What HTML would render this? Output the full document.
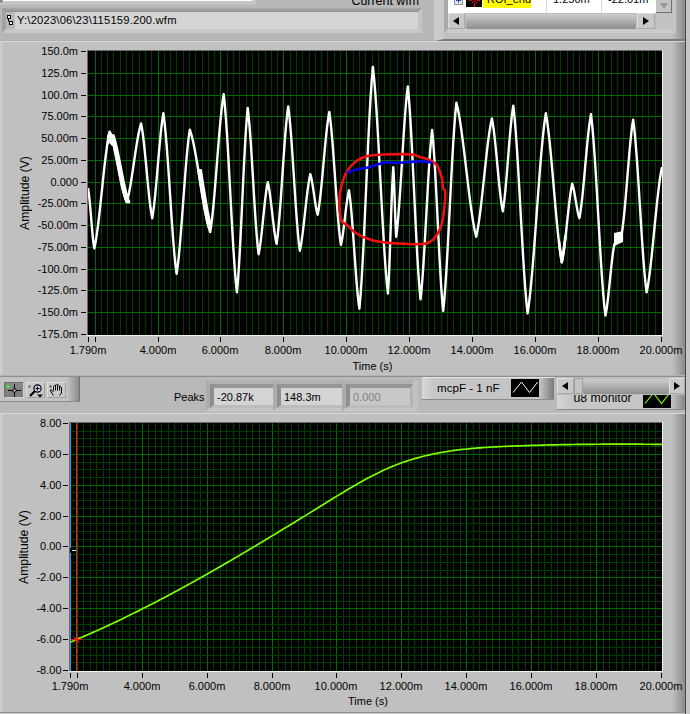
<!DOCTYPE html><html><head><meta charset="utf-8"><style>
html,body{margin:0;padding:0;}
body{width:690px;height:714px;position:relative;overflow:hidden;background:#c0c0c0;font-family:"Liberation Sans", sans-serif;}
.t{position:absolute;white-space:nowrap;line-height:normal;}
div{box-sizing:border-box;}
</style></head><body>
<div style="position:absolute;left:0px;top:0px;width:690px;height:41px;background:#b7b7b7;"></div>
<div style="position:absolute;left:0px;top:0px;width:256px;height:5px;background:linear-gradient(#cacaca,#c0c0c0);"></div>
<div style="position:absolute;left:3px;top:0px;width:249px;height:1px;background:#ffffff;"></div>
<div style="position:absolute;left:0px;top:0px;width:3px;height:3px;background:#8a8a8a;border-radius:0 0 3px 0;"></div>
<div style="position:absolute;left:2px;top:8px;width:420px;height:25px;border-top:4px solid #9c9c9c;border-left:4px solid #a2a2a2;border-bottom:4px solid #c8c8c8;border-right:4px solid #c4c4c4;background:#d4d4d4;"></div>
<div style="position:absolute;left:6px;top:8px;width:412px;height:4px;background:linear-gradient(#adadad,#8e8e8e);"></div>
<div style="position:absolute;left:6px;top:12px;width:9px;height:17px;background:#bababa;"></div>
<svg style="position:absolute;left:6px;top:12px" width="9" height="17"><rect x="1.5" y="3.5" width="3" height="3" fill="#fff" stroke="#000"/><rect x="3.5" y="9.5" width="3" height="3" fill="#fff" stroke="#000"/><line x1="2.5" y1="6.5" x2="2.5" y2="9.5" stroke="#000"/></svg>
<div class="t" style="left:17px;top:14.48px;font-size:11.2px;color:#000;letter-spacing:0.2px;">Y:\2023\06\23\115159.200.wfm</div>
<div class="t" style="right:271px;text-align:right;top:-5.93px;font-size:12.4px;color:#000;">Current wfm</div>
<div style="position:absolute;left:434px;top:0px;width:251px;height:41px;border-left:10px solid #cbcbcb;border-bottom:2px solid #7a7a7a;background:#c0c0c0;"></div>
<div style="position:absolute;left:444px;top:0px;width:231px;height:33px;border-left:4px solid #a9a9a9;border-bottom:4px solid #cacaca;border-right:3px solid #c6c6c6;background:#fff;"></div>
<div style="position:absolute;left:454px;top:0px;width:9px;height:5px;background:#e8e8e8;border:1px solid #909090;border-top:none;border-radius:0 0 1px 1px;"></div>
<svg style="position:absolute;left:454px;top:0" width="9" height="5"><path d="M2 0.5 H7 M4.5 0 V3" stroke="#2050c0" stroke-width="1"/></svg>
<div style="position:absolute;left:466px;top:0px;width:16px;height:7px;background:#000;"></div>
<svg style="position:absolute;left:466px;top:0" width="16" height="7"><rect x="2.5" y="0" width="3" height="1" fill="#f00"/><rect x="11" y="0" width="3" height="1" fill="#f00"/><path d="M6 3 L8.5 0.5 L11 3" stroke="#f00" stroke-width="1" fill="none"/><line x1="8.5" y1="3" x2="8.5" y2="7" stroke="#f00" stroke-width="1"/></svg>
<div style="position:absolute;left:483px;top:0px;width:48px;height:8px;background:#ffff00;"></div>
<div class="t" style="left:487px;top:-6.64px;font-size:11px;color:#000;">ROI_end</div>
<div style="position:absolute;left:546px;top:0px;width:1px;height:13px;background:#d8d8d8;"></div>
<div style="position:absolute;left:601px;top:0px;width:1px;height:13px;background:#d8d8d8;"></div>
<div class="t" style="left:553px;top:-6.84px;font-size:11px;color:#000;">1.250m</div>
<div class="t" style="left:608px;top:-6.84px;font-size:11px;color:#000;">-22.01m</div>
<div style="position:absolute;left:656px;top:0px;width:16px;height:13px;background:#c4c4c4;border-right:1px solid #707070;border-bottom:1px solid #707070;"></div>
<svg style="position:absolute;left:659px;top:2px" width="10" height="8"><path d="M1 1 L9 1 L5 7 Z" fill="#9a9a9a"/></svg>
<div style="position:absolute;left:448px;top:13px;width:208px;height:16px;background:#bdbdbd;"></div>
<div style="position:absolute;left:448px;top:13px;width:17px;height:16px;background:#c8c8c8;border:1px solid #a8a8a8;border-top-color:#e0e0e0;border-left-color:#e0e0e0;"></div>
<svg style="position:absolute;left:448px;top:13px" width="17" height="16"><path d="M5 8 L11 4 L11 12 Z" fill="#000"/></svg>
<div style="position:absolute;left:466px;top:14px;width:170px;height:15px;background:linear-gradient(#cdcdcd,#8e8e8e);border-radius:2px;"></div>
<div style="position:absolute;left:637px;top:13px;width:18px;height:16px;background:#c8c8c8;border:1px solid #a8a8a8;border-top-color:#e0e0e0;border-left-color:#e0e0e0;"></div>
<svg style="position:absolute;left:637px;top:13px" width="18" height="16"><path d="M12 8 L6 4 L6 12 Z" fill="#000"/></svg>
<div style="position:absolute;left:656px;top:13px;width:16px;height:16px;background:#c2c2c2;"></div>
<div style="position:absolute;left:672px;top:0px;width:13px;height:714px;background:linear-gradient(90deg,#c0c0c0,#8a8a8a);"></div>
<div style="position:absolute;left:685px;top:0px;width:1px;height:714px;background:#4a4a4a;"></div>
<div style="position:absolute;left:686px;top:0px;width:4px;height:714px;background:#c6c6c6;"></div>
<div style="position:absolute;left:672px;top:0px;width:4px;height:34px;background:#c6c6c6;"></div>
<div style="position:absolute;left:672px;top:39px;width:13px;height:2px;background:#7a7a7a;"></div>
<div style="position:absolute;left:0px;top:40px;width:434px;height:1px;background:#b0b0b0;"></div>
<div style="position:absolute;left:0px;top:41px;width:685px;height:1px;background:#d6d6d6;"></div>
<div style="position:absolute;left:0px;top:42px;width:672px;height:334px;background:#c0c0c0;"></div>
<div style="position:absolute;left:0px;top:42px;width:3px;height:334px;background:linear-gradient(90deg,#d2d2d2,#c4c4c4);"></div>
<div style="position:absolute;left:0px;top:375px;width:685px;height:1px;background:#b4b4b4;"></div>
<div style="position:absolute;left:0px;top:376px;width:685px;height:1px;background:#8e8e8e;"></div>
<div style="position:absolute;left:0px;top:377px;width:685px;height:36px;background:#b9b9b9;"></div>
<svg style="position:absolute;left:88px;top:51px" width="574" height="284" shape-rendering="crispEdges">
<rect x="0" y="0" width="574" height="284" fill="#000"/>
<rect x="7" y="0" width="1" height="284" fill="#006c00"/>
<rect x="13" y="0" width="1" height="284" fill="#003b00"/>
<rect x="19" y="0" width="1" height="284" fill="#003b00"/>
<rect x="25" y="0" width="1" height="284" fill="#003b00"/>
<rect x="32" y="0" width="1" height="284" fill="#003b00"/>
<rect x="38" y="0" width="1" height="284" fill="#003b00"/>
<rect x="44" y="0" width="1" height="284" fill="#003b00"/>
<rect x="51" y="0" width="1" height="284" fill="#003b00"/>
<rect x="57" y="0" width="1" height="284" fill="#003b00"/>
<rect x="63" y="0" width="1" height="284" fill="#003b00"/>
<rect x="70" y="0" width="1" height="284" fill="#006c00"/>
<rect x="76" y="0" width="1" height="284" fill="#003b00"/>
<rect x="82" y="0" width="1" height="284" fill="#003b00"/>
<rect x="88" y="0" width="1" height="284" fill="#003b00"/>
<rect x="95" y="0" width="1" height="284" fill="#003b00"/>
<rect x="101" y="0" width="1" height="284" fill="#003b00"/>
<rect x="107" y="0" width="1" height="284" fill="#003b00"/>
<rect x="114" y="0" width="1" height="284" fill="#003b00"/>
<rect x="120" y="0" width="1" height="284" fill="#003b00"/>
<rect x="126" y="0" width="1" height="284" fill="#003b00"/>
<rect x="132" y="0" width="1" height="284" fill="#006c00"/>
<rect x="139" y="0" width="1" height="284" fill="#003b00"/>
<rect x="145" y="0" width="1" height="284" fill="#003b00"/>
<rect x="151" y="0" width="1" height="284" fill="#003b00"/>
<rect x="158" y="0" width="1" height="284" fill="#003b00"/>
<rect x="164" y="0" width="1" height="284" fill="#003b00"/>
<rect x="170" y="0" width="1" height="284" fill="#003b00"/>
<rect x="177" y="0" width="1" height="284" fill="#003b00"/>
<rect x="183" y="0" width="1" height="284" fill="#003b00"/>
<rect x="189" y="0" width="1" height="284" fill="#003b00"/>
<rect x="195" y="0" width="1" height="284" fill="#006c00"/>
<rect x="202" y="0" width="1" height="284" fill="#003b00"/>
<rect x="208" y="0" width="1" height="284" fill="#003b00"/>
<rect x="214" y="0" width="1" height="284" fill="#003b00"/>
<rect x="221" y="0" width="1" height="284" fill="#003b00"/>
<rect x="227" y="0" width="1" height="284" fill="#003b00"/>
<rect x="233" y="0" width="1" height="284" fill="#003b00"/>
<rect x="239" y="0" width="1" height="284" fill="#003b00"/>
<rect x="246" y="0" width="1" height="284" fill="#003b00"/>
<rect x="252" y="0" width="1" height="284" fill="#003b00"/>
<rect x="258" y="0" width="1" height="284" fill="#006c00"/>
<rect x="265" y="0" width="1" height="284" fill="#003b00"/>
<rect x="271" y="0" width="1" height="284" fill="#003b00"/>
<rect x="277" y="0" width="1" height="284" fill="#003b00"/>
<rect x="284" y="0" width="1" height="284" fill="#003b00"/>
<rect x="290" y="0" width="1" height="284" fill="#003b00"/>
<rect x="296" y="0" width="1" height="284" fill="#003b00"/>
<rect x="302" y="0" width="1" height="284" fill="#003b00"/>
<rect x="309" y="0" width="1" height="284" fill="#003b00"/>
<rect x="315" y="0" width="1" height="284" fill="#003b00"/>
<rect x="321" y="0" width="1" height="284" fill="#006c00"/>
<rect x="328" y="0" width="1" height="284" fill="#003b00"/>
<rect x="334" y="0" width="1" height="284" fill="#003b00"/>
<rect x="340" y="0" width="1" height="284" fill="#003b00"/>
<rect x="346" y="0" width="1" height="284" fill="#003b00"/>
<rect x="353" y="0" width="1" height="284" fill="#003b00"/>
<rect x="359" y="0" width="1" height="284" fill="#003b00"/>
<rect x="365" y="0" width="1" height="284" fill="#003b00"/>
<rect x="372" y="0" width="1" height="284" fill="#003b00"/>
<rect x="378" y="0" width="1" height="284" fill="#003b00"/>
<rect x="384" y="0" width="1" height="284" fill="#006c00"/>
<rect x="390" y="0" width="1" height="284" fill="#003b00"/>
<rect x="397" y="0" width="1" height="284" fill="#003b00"/>
<rect x="403" y="0" width="1" height="284" fill="#003b00"/>
<rect x="409" y="0" width="1" height="284" fill="#003b00"/>
<rect x="416" y="0" width="1" height="284" fill="#003b00"/>
<rect x="422" y="0" width="1" height="284" fill="#003b00"/>
<rect x="428" y="0" width="1" height="284" fill="#003b00"/>
<rect x="435" y="0" width="1" height="284" fill="#003b00"/>
<rect x="441" y="0" width="1" height="284" fill="#003b00"/>
<rect x="447" y="0" width="1" height="284" fill="#006c00"/>
<rect x="453" y="0" width="1" height="284" fill="#003b00"/>
<rect x="460" y="0" width="1" height="284" fill="#003b00"/>
<rect x="466" y="0" width="1" height="284" fill="#003b00"/>
<rect x="472" y="0" width="1" height="284" fill="#003b00"/>
<rect x="479" y="0" width="1" height="284" fill="#003b00"/>
<rect x="485" y="0" width="1" height="284" fill="#003b00"/>
<rect x="491" y="0" width="1" height="284" fill="#003b00"/>
<rect x="497" y="0" width="1" height="284" fill="#003b00"/>
<rect x="504" y="0" width="1" height="284" fill="#003b00"/>
<rect x="510" y="0" width="1" height="284" fill="#006c00"/>
<rect x="516" y="0" width="1" height="284" fill="#003b00"/>
<rect x="523" y="0" width="1" height="284" fill="#003b00"/>
<rect x="529" y="0" width="1" height="284" fill="#003b00"/>
<rect x="535" y="0" width="1" height="284" fill="#003b00"/>
<rect x="542" y="0" width="1" height="284" fill="#003b00"/>
<rect x="548" y="0" width="1" height="284" fill="#003b00"/>
<rect x="554" y="0" width="1" height="284" fill="#003b00"/>
<rect x="560" y="0" width="1" height="284" fill="#003b00"/>
<rect x="567" y="0" width="1" height="284" fill="#003b00"/>
<rect x="0" y="22" width="574" height="1" fill="#006c00"/>
<rect x="0" y="44" width="574" height="1" fill="#006c00"/>
<rect x="0" y="65" width="574" height="1" fill="#006c00"/>
<rect x="0" y="87" width="574" height="1" fill="#006c00"/>
<rect x="0" y="109" width="574" height="1" fill="#006c00"/>
<rect x="0" y="131" width="574" height="1" fill="#006c00"/>
<rect x="0" y="152" width="574" height="1" fill="#006c00"/>
<rect x="0" y="174" width="574" height="1" fill="#006c00"/>
<rect x="0" y="196" width="574" height="1" fill="#006c00"/>
<rect x="0" y="218" width="574" height="1" fill="#006c00"/>
<rect x="0" y="239" width="574" height="1" fill="#006c00"/>
<rect x="0" y="261" width="574" height="1" fill="#006c00"/>
</svg>
<div style="position:absolute;left:87px;top:50px;width:576px;height:1px;background:#6a6a6a;"></div>
<div style="position:absolute;left:87px;top:50px;width:1px;height:286px;background:#6a6a6a;"></div>
<div style="position:absolute;left:87px;top:335px;width:576px;height:1px;background:#f2f2f2;"></div>
<div style="position:absolute;left:662px;top:50px;width:1px;height:286px;background:#f2f2f2;"></div>
<svg style="position:absolute;left:88px;top:51px" width="574" height="284"><polyline points="0.00,137.00 0.53,140.23 1.05,144.36 1.58,149.29 2.10,154.87 2.62,160.91 3.15,167.20 3.67,173.49 4.20,179.53 4.72,185.11 5.25,190.04 5.77,194.17 6.30,197.40 7.58,191.16 8.85,183.18 10.12,173.66 11.40,162.88 12.67,151.19 13.95,139.05 15.22,126.91 16.50,115.22 17.77,104.44 19.05,94.92 20.32,86.94 21.60,80.70 23.02,84.46 24.45,89.26 25.88,95.00 27.30,101.50 28.72,108.53 30.15,115.85 31.58,123.17 33.00,130.20 34.42,136.70 35.85,142.44 37.28,147.24 38.70,151.00 39.90,146.80 41.10,141.44 42.30,135.03 43.50,127.78 44.70,119.92 45.90,111.75 47.10,103.58 48.30,95.72 49.50,88.47 50.70,82.06 51.90,76.70 53.10,72.50 54.03,77.57 54.95,84.04 55.88,91.76 56.80,100.52 57.72,109.99 58.65,119.85 59.57,129.71 60.50,139.18 61.42,147.94 62.35,155.66 63.27,162.13 64.20,167.20 65.13,161.59 66.07,154.42 67.00,145.86 67.93,136.17 68.87,125.67 69.80,114.75 70.73,103.83 71.67,93.33 72.60,83.64 73.53,75.08 74.47,67.91 75.40,62.30 76.50,70.89 77.60,81.86 78.70,94.97 79.80,109.81 80.90,125.89 82.00,142.60 83.10,159.31 84.20,175.39 85.30,190.23 86.40,203.34 87.50,214.31 88.60,222.90 89.70,215.18 90.80,205.32 91.90,193.55 93.00,180.21 94.10,165.77 95.20,150.75 96.30,135.73 97.40,121.29 98.50,107.95 99.60,96.18 100.70,86.32 101.80,78.60 103.50,84.08 105.20,91.09 106.90,99.45 108.60,108.92 110.30,119.18 112.00,129.85 113.70,140.52 115.40,150.78 117.10,160.25 118.80,168.61 120.50,175.62 122.20,181.10 123.32,173.72 124.45,164.29 125.57,153.03 126.70,140.28 127.82,126.46 128.95,112.10 130.07,97.74 131.20,83.93 132.32,71.17 133.45,59.91 134.57,50.48 135.70,43.10 136.80,53.71 137.90,67.26 139.00,83.43 140.10,101.76 141.20,121.61 142.30,142.25 143.40,162.89 144.50,182.74 145.60,201.07 146.70,217.24 147.80,230.79 148.90,241.40 149.80,231.53 150.70,218.94 151.60,203.89 152.50,186.85 153.40,168.39 154.30,149.20 155.20,130.01 156.10,111.55 157.00,94.51 157.90,79.46 158.80,66.87 159.70,57.00 160.61,64.82 161.52,74.81 162.43,86.74 163.33,100.25 164.24,114.89 165.15,130.10 166.06,145.31 166.97,159.95 167.88,173.46 168.78,185.39 169.69,195.38 170.60,203.20 171.37,199.35 172.13,194.43 172.90,188.56 173.67,181.90 174.43,174.69 175.20,167.20 175.97,159.71 176.73,152.50 177.50,145.84 178.27,139.97 179.03,135.05 179.80,131.20 180.53,134.50 181.27,138.70 182.00,143.73 182.73,149.42 183.47,155.59 184.20,162.00 184.93,168.41 185.67,174.58 186.40,180.27 187.13,185.30 187.87,189.50 188.60,192.80 189.57,185.45 190.53,176.06 191.50,164.85 192.47,152.15 193.43,138.40 194.40,124.10 195.37,109.80 196.33,96.05 197.30,83.35 198.27,72.14 199.23,62.75 200.20,55.40 201.17,63.12 202.13,72.98 203.10,84.75 204.07,98.09 205.03,112.53 206.00,127.55 206.97,142.57 207.93,157.01 208.90,170.35 209.87,182.12 210.83,191.98 211.80,199.70 212.68,195.60 213.55,190.37 214.43,184.12 215.30,177.04 216.18,169.37 217.05,161.40 217.93,153.43 218.80,145.76 219.68,138.68 220.55,132.43 221.43,127.20 222.30,123.10 222.92,125.27 223.53,128.05 224.15,131.36 224.77,135.11 225.38,139.17 226.00,143.40 226.62,147.63 227.23,151.69 227.85,155.44 228.47,158.75 229.08,161.53 229.70,163.70 230.67,158.21 231.63,151.19 232.60,142.81 233.57,133.32 234.53,123.04 235.50,112.35 236.47,101.66 237.43,91.38 238.40,81.89 239.37,73.51 240.33,66.49 241.30,61.00 242.27,68.11 243.23,77.19 244.20,88.03 245.17,100.32 246.13,113.62 247.10,127.45 248.07,141.28 249.03,154.58 250.00,166.87 250.97,177.71 251.93,186.79 252.90,193.90 253.57,190.98 254.25,187.25 254.92,182.79 255.60,177.75 256.27,172.28 256.95,166.60 257.62,160.92 258.30,155.45 258.98,150.41 259.65,145.95 260.32,142.22 261.00,139.30 261.87,145.63 262.73,153.72 263.60,163.38 264.47,174.33 265.33,186.18 266.20,198.50 267.07,210.82 267.93,222.67 268.80,233.62 269.67,243.28 270.53,251.37 271.40,257.70 272.52,244.77 273.65,228.26 274.77,208.54 275.90,186.20 277.02,162.00 278.15,136.85 279.27,111.70 280.40,87.50 281.52,65.16 282.65,45.44 283.77,28.93 284.90,16.00 286.15,28.12 287.40,43.60 288.65,62.09 289.90,83.04 291.15,105.72 292.40,129.30 293.65,152.88 294.90,175.56 296.15,196.51 297.40,215.00 298.65,230.48 299.90,242.60 300.35,235.84 300.80,227.20 301.25,216.89 301.70,205.21 302.15,192.55 302.60,179.40 303.05,166.25 303.50,153.59 303.95,141.91 304.40,131.60 304.85,122.96 305.30,116.20 305.54,119.92 305.78,124.68 306.02,130.36 306.27,136.79 306.51,143.76 306.75,151.00 306.99,158.24 307.23,165.21 307.48,171.64 307.72,177.32 307.96,182.08 308.20,185.80 309.17,177.75 310.13,167.48 311.10,155.21 312.07,141.31 313.03,126.25 314.00,110.60 314.97,94.95 315.93,79.89 316.90,65.99 317.87,53.72 318.83,43.45 319.80,35.40 320.86,46.80 321.92,61.35 322.98,78.72 324.03,98.41 325.09,119.73 326.15,141.90 327.21,164.07 328.27,185.39 329.32,205.08 330.38,222.45 331.44,237.00 332.50,248.40 333.47,239.34 334.43,227.77 335.40,213.94 336.37,198.29 337.33,181.33 338.30,163.70 339.27,146.07 340.23,129.11 341.20,113.46 342.17,99.63 343.13,88.06 344.10,79.00 345.03,88.68 345.95,101.05 346.88,115.82 347.80,132.55 348.73,150.66 349.65,169.50 350.57,188.34 351.50,206.45 352.43,223.18 353.35,237.95 354.27,250.32 355.20,260.00 356.30,248.86 357.40,234.63 358.50,217.63 359.60,198.38 360.70,177.53 361.80,155.85 362.90,134.17 364.00,113.32 365.10,94.07 366.20,77.07 367.30,62.84 368.40,51.70 370.05,58.87 371.70,68.03 373.35,78.98 375.00,91.37 376.65,104.79 378.30,118.75 379.95,132.71 381.60,146.13 383.25,158.52 384.90,169.47 386.55,178.63 388.20,185.80 389.51,179.47 390.82,171.38 392.12,161.72 393.43,150.77 394.74,138.92 396.05,126.60 397.36,114.28 398.67,102.43 399.97,91.48 401.28,81.82 402.59,73.73 403.90,67.40 404.81,72.37 405.72,78.72 406.62,86.30 407.53,94.88 408.44,104.18 409.35,113.85 410.26,123.52 411.17,132.82 412.07,141.40 412.98,148.98 413.89,155.33 414.80,160.30 415.68,154.65 416.55,147.44 417.43,138.82 418.30,129.06 419.18,118.49 420.05,107.50 420.92,96.51 421.80,85.94 422.67,76.18 423.55,67.56 424.42,60.35 425.30,54.70 426.49,65.81 427.68,79.99 428.88,96.93 430.07,116.12 431.26,136.90 432.45,158.50 433.64,180.10 434.83,200.88 436.02,220.07 437.22,237.01 438.41,251.19 439.60,262.30 441.12,251.60 442.63,237.94 444.15,221.62 445.67,203.13 447.18,183.11 448.70,162.30 450.22,141.49 451.73,121.47 453.25,102.98 454.77,86.66 456.28,73.00 457.80,62.30 459.13,70.27 460.47,80.45 461.80,92.61 463.13,106.38 464.47,121.29 465.80,136.80 467.13,152.31 468.47,167.22 469.80,180.99 471.13,193.15 472.47,203.33 473.80,211.30 474.67,207.10 475.53,201.74 476.40,195.33 477.27,188.08 478.13,180.22 479.00,172.05 479.87,163.88 480.73,156.02 481.60,148.77 482.47,142.36 483.33,137.00 484.20,132.80 484.80,134.64 485.40,136.99 486.00,139.80 486.60,142.98 487.20,146.42 487.80,150.00 488.40,153.58 489.00,157.02 489.60,160.20 490.20,163.01 490.80,165.36 491.40,167.20 492.37,161.64 493.33,154.54 494.30,146.07 495.27,136.46 496.23,126.06 497.20,115.25 498.17,104.44 499.13,94.04 500.10,84.43 501.07,75.96 502.03,68.86 503.00,63.30 504.20,74.07 505.40,87.82 506.60,104.24 507.80,122.85 509.00,143.00 510.20,163.95 511.40,184.90 512.60,205.05 513.80,223.66 515.00,240.08 516.20,253.83 517.40,264.60 518.16,260.77 518.92,255.88 519.67,250.04 520.43,243.42 521.19,236.25 521.95,228.80 522.71,221.35 523.47,214.18 524.23,207.56 524.98,201.72 525.74,196.83 526.50,193.00 527.08,192.52 527.67,191.90 528.25,191.17 528.83,190.34 529.42,189.44 530.00,188.50 530.58,187.56 531.17,186.66 531.75,185.83 532.33,185.10 532.92,184.48 533.50,184.00 534.48,177.83 535.45,169.94 536.42,160.53 537.40,149.86 538.38,138.31 539.35,126.30 540.33,114.29 541.30,102.74 542.28,92.07 543.25,82.66 544.23,74.77 545.20,68.60 546.32,77.84 547.43,89.65 548.55,103.75 549.67,119.72 550.78,137.02 551.90,155.00 553.02,172.98 554.13,190.28 555.25,206.25 556.37,220.35 557.48,232.16 558.60,241.40 559.88,234.69 561.17,226.12 562.45,215.89 563.73,204.30 565.02,191.75 566.30,178.70 567.58,165.65 568.87,153.10 570.15,141.51 571.43,131.28 572.72,122.71 574.00,116.00" fill="none" stroke="#fff" stroke-width="2.4" stroke-linejoin="round"/>
<polygon points="23.02,84.46 24.45,89.26 25.88,95.00 27.30,101.50 28.72,108.53 30.15,115.85 31.58,123.17 33.00,130.20 34.42,136.70 35.85,142.44 37.28,147.24 38.70,151.00 41.20,151.00 39.78,147.24 38.35,142.44 36.92,136.70 35.50,130.20 34.08,123.17 32.65,115.85 31.22,108.53 29.80,101.50 28.38,95.00 26.95,89.26 25.52,84.46" fill="#fff" stroke="#fff" stroke-width="2.4" stroke-linejoin="round"/>
<polygon points="110.30,119.18 112.00,129.85 113.70,140.52 115.40,150.78 117.10,160.25 118.80,168.61 120.50,175.62 123.00,175.62 121.30,168.61 119.60,160.25 117.90,150.78 116.20,140.52 114.50,129.85 112.80,119.18" fill="#fff" stroke="#fff" stroke-width="2.4" stroke-linejoin="round"/>
<polygon points="284.90,16.00 284.90,20.00" fill="#fff" stroke="#fff" stroke-width="2.4" stroke-linejoin="round"/>
<polygon points="471.13,193.15 472.47,203.33 473.80,211.30 474.67,207.10 475.53,201.74 476.40,195.33 477.27,188.08 477.27,185.08 476.40,192.33 475.53,198.74 474.67,204.10 473.80,208.30 472.47,200.33 471.13,190.15" fill="#fff" stroke="#fff" stroke-width="2.4" stroke-linejoin="round"/>
<polygon points="526.0,182.0 535.0,180.0 535.0,191.0 526.0,195.0" fill="#fff"/>
<polygon points="19.0,85.0 21.6,79.5 25.0,84.0 28.0,91.0 24.0,95.0 21.5,92.0 18.5,96.0" fill="#fff"/>
<path d="M253.30,169.30 C252.03,165.38 251.40,156.15 251.40,150.50 C251.40,144.85 252.03,140.42 253.30,135.40 C254.57,130.38 256.48,124.63 259.00,120.40 C261.52,116.17 264.95,112.58 268.40,110.00 C271.85,107.42 274.68,106.00 279.70,104.90 C284.72,103.80 291.28,103.65 298.50,103.40 C305.72,103.15 317.35,102.93 323.00,103.40 C328.65,103.87 329.27,105.25 332.40,106.20 C335.53,107.15 338.98,107.68 341.80,109.10 C344.62,110.52 347.27,111.57 349.30,114.70 C351.33,117.83 353.05,124.13 354.00,127.90 C354.95,131.67 354.45,135.10 355.00,137.30 C355.55,139.50 357.15,137.33 357.30,141.10 C357.45,144.87 356.60,154.25 355.90,159.90 C355.20,165.55 354.82,170.28 353.10,175.00 C351.38,179.72 348.42,185.22 345.60,188.20 C342.78,191.18 340.92,192.12 336.20,192.90 C331.48,193.68 323.27,193.07 317.30,192.90 C311.33,192.73 306.05,192.53 300.40,191.90 C294.75,191.27 288.73,190.67 283.40,189.10 C278.07,187.53 272.47,185.02 268.40,182.50 C264.33,179.98 261.52,176.20 259.00,174.00 C256.48,171.80 254.57,173.22 253.30,169.30 Z" fill="none" stroke="#f01010" stroke-width="2.6"/>
<path d="M259.90,121.30 C261.62,120.77 266.90,118.88 270.20,118.10 C273.50,117.32 275.30,117.70 279.70,116.60 C284.10,115.50 291.90,112.28 296.60,111.50 C301.30,110.72 302.88,112.05 307.90,111.90 C312.92,111.75 321.68,110.82 326.70,110.60 C331.72,110.38 335.17,110.38 338.00,110.60 C340.83,110.82 342.75,111.68 343.70,111.90" fill="none" stroke="#0000f0" stroke-width="2.6" stroke-linecap="round"/>
</svg>
<div style="position:absolute;left:81px;top:51px;width:5px;height:1px;background:#000;"></div>
<div class="t" style="right:612px;text-align:right;top:45.36px;font-size:11px;color:#000;">150.0m</div>
<div style="position:absolute;left:81px;top:73px;width:5px;height:1px;background:#000;"></div>
<div class="t" style="right:612px;text-align:right;top:67.36px;font-size:11px;color:#000;">125.0m</div>
<div style="position:absolute;left:81px;top:95px;width:5px;height:1px;background:#000;"></div>
<div class="t" style="right:612px;text-align:right;top:89.36px;font-size:11px;color:#000;">100.0m</div>
<div style="position:absolute;left:81px;top:116px;width:5px;height:1px;background:#000;"></div>
<div class="t" style="right:612px;text-align:right;top:110.36px;font-size:11px;color:#000;">75.00m</div>
<div style="position:absolute;left:81px;top:138px;width:5px;height:1px;background:#000;"></div>
<div class="t" style="right:612px;text-align:right;top:132.36px;font-size:11px;color:#000;">50.00m</div>
<div style="position:absolute;left:81px;top:160px;width:5px;height:1px;background:#000;"></div>
<div class="t" style="right:612px;text-align:right;top:154.36px;font-size:11px;color:#000;">25.00m</div>
<div style="position:absolute;left:81px;top:182px;width:5px;height:1px;background:#000;"></div>
<div class="t" style="right:612px;text-align:right;top:176.36px;font-size:11px;color:#000;">0.000</div>
<div style="position:absolute;left:81px;top:203px;width:5px;height:1px;background:#000;"></div>
<div class="t" style="right:612px;text-align:right;top:197.36px;font-size:11px;color:#000;">-25.00m</div>
<div style="position:absolute;left:81px;top:225px;width:5px;height:1px;background:#000;"></div>
<div class="t" style="right:612px;text-align:right;top:219.36px;font-size:11px;color:#000;">-50.00m</div>
<div style="position:absolute;left:81px;top:247px;width:5px;height:1px;background:#000;"></div>
<div class="t" style="right:612px;text-align:right;top:241.36px;font-size:11px;color:#000;">-75.00m</div>
<div style="position:absolute;left:81px;top:269px;width:5px;height:1px;background:#000;"></div>
<div class="t" style="right:612px;text-align:right;top:263.36px;font-size:11px;color:#000;">-100.0m</div>
<div style="position:absolute;left:81px;top:290px;width:5px;height:1px;background:#000;"></div>
<div class="t" style="right:612px;text-align:right;top:284.36px;font-size:11px;color:#000;">-125.0m</div>
<div style="position:absolute;left:81px;top:312px;width:5px;height:1px;background:#000;"></div>
<div class="t" style="right:612px;text-align:right;top:306.36px;font-size:11px;color:#000;">-150.0m</div>
<div style="position:absolute;left:81px;top:334px;width:5px;height:1px;background:#000;"></div>
<div class="t" style="right:612px;text-align:right;top:328.36px;font-size:11px;color:#000;">-175.0m</div>
<div style="position:absolute;left:88px;top:337px;width:1px;height:5px;background:#000;"></div>
<div style="position:absolute;left:95px;top:337px;width:1px;height:5px;background:#000;"></div>
<div style="position:absolute;left:158px;top:337px;width:1px;height:5px;background:#000;"></div>
<div style="position:absolute;left:220px;top:337px;width:1px;height:5px;background:#000;"></div>
<div style="position:absolute;left:283px;top:337px;width:1px;height:5px;background:#000;"></div>
<div style="position:absolute;left:346px;top:337px;width:1px;height:5px;background:#000;"></div>
<div style="position:absolute;left:409px;top:337px;width:1px;height:5px;background:#000;"></div>
<div style="position:absolute;left:472px;top:337px;width:1px;height:5px;background:#000;"></div>
<div style="position:absolute;left:535px;top:337px;width:1px;height:5px;background:#000;"></div>
<div style="position:absolute;left:598px;top:337px;width:1px;height:5px;background:#000;"></div>
<div style="position:absolute;left:661px;top:337px;width:1px;height:5px;background:#000;"></div>
<div class="t" style="left:-62px;width:300px;text-align:center;top:343.86px;font-size:11px;color:#000;">1.790m</div>
<div class="t" style="left:8px;width:300px;text-align:center;top:343.86px;font-size:11px;color:#000;">4.000m</div>
<div class="t" style="left:70px;width:300px;text-align:center;top:343.86px;font-size:11px;color:#000;">6.000m</div>
<div class="t" style="left:133px;width:300px;text-align:center;top:343.86px;font-size:11px;color:#000;">8.000m</div>
<div class="t" style="left:196px;width:300px;text-align:center;top:343.86px;font-size:11px;color:#000;">10.000m</div>
<div class="t" style="left:259px;width:300px;text-align:center;top:343.86px;font-size:11px;color:#000;">12.000m</div>
<div class="t" style="left:322px;width:300px;text-align:center;top:343.86px;font-size:11px;color:#000;">14.000m</div>
<div class="t" style="left:385px;width:300px;text-align:center;top:343.86px;font-size:11px;color:#000;">16.000m</div>
<div class="t" style="left:448px;width:300px;text-align:center;top:343.86px;font-size:11px;color:#000;">18.000m</div>
<div class="t" style="left:511px;width:300px;text-align:center;top:343.86px;font-size:11px;color:#000;">20.000m</div>
<div class="t" style="left:222.5px;width:300px;text-align:center;top:360.36px;font-size:11px;color:#000;">Time (s)</div>
<div class="t" style="left:25px;top:193px;font-size:12.2px;transform:translate(-50%,-50%) rotate(-90deg);">Amplitude (V)</div>
<div style="position:absolute;left:0px;top:377px;width:80px;height:25px;background:linear-gradient(90deg,#c3c3c3 0,#c3c3c3 67px,#8c8c8c 79px);border-right:1px solid #707070;border-bottom:1px solid #8e8e8e;"></div>
<div style="position:absolute;left:4px;top:382px;width:20px;height:16px;background:linear-gradient(#8a8a8a,#7c7c7c);border:1px solid #6e6e6e;border-right-color:#d0d0d0;border-bottom-color:#d0d0d0;"></div>
<svg style="position:absolute;left:4px;top:382px" width="20" height="16"><line x1="4" y1="8.5" x2="17" y2="8.5" stroke="#000"/><line x1="10.5" y1="2" x2="10.5" y2="15" stroke="#000"/><circle cx="10.5" cy="8.5" r="1.8" fill="#b0b0b0" stroke="#000" stroke-width="1"/><circle cx="4" cy="4.5" r="1.6" fill="#30ff30"/></svg>
<div style="position:absolute;left:26px;top:382px;width:19px;height:16px;background:#c8c8c8;border:1px solid #a0a0a0;border-top-color:#dcdcdc;border-left-color:#dcdcdc;"></div>
<svg style="position:absolute;left:26px;top:382px" width="19" height="16"><rect x="2.5" y="3.5" width="2" height="2" fill="#2a7a2a"/><line x1="4" y1="14" x2="9" y2="9" stroke="#000" stroke-width="2.2"/><circle cx="11.5" cy="6.5" r="3.6" fill="#dcdcff" stroke="#000" stroke-width="1.2"/><path d="M9.5 6.5 H13.5 M11.5 4.5 V8.5" stroke="#000" stroke-width="1.2"/><path d="M11 12.5 L17 12.5 L14 15.5 Z" fill="#000"/></svg>
<div style="position:absolute;left:47px;top:382px;width:19px;height:16px;background:#c8c8c8;border:1px solid #a0a0a0;border-top-color:#dcdcdc;border-left-color:#dcdcdc;"></div>
<svg style="position:absolute;left:47px;top:382px" width="19" height="16"><rect x="2.5" y="3.5" width="2" height="2" fill="#2a6a2a"/><path d="M6.5 8.5 V4.5 Q7.5 2.6 8.5 4 V3 Q9.5 1.6 10.5 3 V8.5 M8.5 3.5 V8.5 M10.5 3 Q11.5 2.6 12.5 4 V8.5 M12.5 4.5 Q13.8 4 14.5 6 V11 L12.5 13.5 M4 7.5 L6.5 10 M4 7.5 Q3.2 8.2 3.5 9 L6.5 13.5" fill="none" stroke="#000" stroke-width="1"/></svg>
<div style="position:absolute;left:0px;top:413px;width:685px;height:1px;background:#d8d8d8;"></div>
<div class="t" style="left:174px;top:390.86px;font-size:11px;color:#000;">Peaks</div>
<div style="position:absolute;left:206px;top:380px;width:212px;height:32px;background:#c0c0c0;"></div>
<div style="position:absolute;left:206px;top:380px;width:73px;height:31px;border-top:4px solid #b2b2b2;border-left:4px solid #acacac;border-bottom:3px solid #c6c6c6;border-right:3px solid #c2c2c2;"></div>
<div style="position:absolute;left:210px;top:384px;width:67px;height:24px;border-top:4px solid #969696;border-left:4px solid #8e8e8e;border-bottom:3px solid #bcbcbc;border-right:3px solid #b4b4b4;background:#d4d4d4;"></div>
<div class="t" style="left:217px;top:390.86px;font-size:11px;color:#000;">-20.87k</div>
<div style="position:absolute;left:273px;top:380px;width:74px;height:31px;border-top:4px solid #b2b2b2;border-left:4px solid #acacac;border-bottom:3px solid #c6c6c6;border-right:3px solid #c2c2c2;"></div>
<div style="position:absolute;left:277px;top:384px;width:68px;height:24px;border-top:4px solid #969696;border-left:4px solid #8e8e8e;border-bottom:3px solid #bcbcbc;border-right:3px solid #b4b4b4;background:#d4d4d4;"></div>
<div class="t" style="left:284px;top:390.86px;font-size:11px;color:#000;">148.3m</div>
<div style="position:absolute;left:342px;top:380px;width:73px;height:31px;border-top:4px solid #b2b2b2;border-left:4px solid #acacac;border-bottom:3px solid #c6c6c6;border-right:3px solid #c2c2c2;"></div>
<div style="position:absolute;left:346px;top:384px;width:67px;height:24px;border-top:4px solid #969696;border-left:4px solid #8e8e8e;border-bottom:3px solid #bcbcbc;border-right:3px solid #b4b4b4;background:#c8c8c8;"></div>
<div class="t" style="left:353px;top:390.86px;font-size:11px;color:#808080;">0.000</div>
<div style="position:absolute;left:422px;top:377px;width:132px;height:23px;background:linear-gradient(90deg,#d8d8d8 0,#c6c6c6 13px,#c4c4c4 118px,#7e7e7e 131px);border-top:1px solid #e6e6e6;border-bottom:1px solid #8a8a8a;"></div>
<div class="t" style="left:437px;top:381.31px;font-size:11.6px;color:#000;">mcpF - 1 nF</div>
<div style="position:absolute;left:511px;top:379px;width:28px;height:18px;background:#000;"></div>
<svg style="position:absolute;left:511px;top:379px" width="28" height="18"><polyline points="2,13.5 10.5,3 18.5,13.5 26.7,3" fill="none" stroke="#fff" stroke-width="1"/></svg>
<div style="position:absolute;left:557px;top:394px;width:128px;height:16px;background:linear-gradient(90deg,#d6d6d6 0,#c6c6c6 14px,#c6c6c6 114px,#8a8a8a 127px);border-bottom:1px solid #8a8a8a;"></div>
<div class="t" style="left:573.5px;top:391.17px;font-size:12.3px;color:#000;">u8 monitor</div>
<div style="position:absolute;left:643px;top:394px;width:28px;height:14px;background:#000;"></div>
<svg style="position:absolute;left:643px;top:394px" width="28" height="14"><polyline points="2,9.5 10.5,-1 18.5,9.5 26.7,-1" fill="none" stroke="#7fff00" stroke-width="1.1"/></svg>
<div style="position:absolute;left:554px;top:377px;width:131px;height:18px;background:#bdbdbd;"></div>
<div style="position:absolute;left:557px;top:378px;width:17px;height:16px;background:#c8c8c8;border:1px solid #a8a8a8;border-top-color:#e0e0e0;border-left-color:#e0e0e0;"></div>
<svg style="position:absolute;left:557px;top:378px" width="17" height="16"><path d="M5 8 L11 4 L11 12 Z" fill="#000"/></svg>
<div style="position:absolute;left:574px;top:378px;width:9px;height:16px;background:#c4c4c4;border:1px solid #a0a0a0;"></div>
<div style="position:absolute;left:583px;top:379px;width:86px;height:15px;background:linear-gradient(#cdcdcd,#8e8e8e);border-radius:2px;"></div>
<div style="position:absolute;left:669px;top:378px;width:16px;height:16px;background:#c8c8c8;border:1px solid #a8a8a8;border-top-color:#e0e0e0;border-left-color:#e0e0e0;"></div>
<svg style="position:absolute;left:669px;top:378px" width="16" height="16"><path d="M11 8 L5 4 L5 12 Z" fill="#000"/></svg>
<div style="position:absolute;left:0px;top:414px;width:672px;height:298px;background:#c0c0c0;"></div>
<div style="position:absolute;left:0px;top:414px;width:3px;height:298px;background:linear-gradient(90deg,#d2d2d2,#c4c4c4);"></div>
<div style="position:absolute;left:0px;top:712px;width:685px;height:1px;background:#909090;"></div>
<div style="position:absolute;left:0px;top:713px;width:685px;height:1px;background:#cacaca;"></div>
<svg style="position:absolute;left:70px;top:423px" width="592" height="248" shape-rendering="crispEdges">
<rect x="0" y="0" width="592" height="248" fill="#000"/>
<rect x="7" y="0" width="1" height="248" fill="#006c00"/>
<rect x="13" y="0" width="1" height="248" fill="#003e00"/>
<rect x="20" y="0" width="1" height="248" fill="#003e00"/>
<rect x="26" y="0" width="1" height="248" fill="#003e00"/>
<rect x="33" y="0" width="1" height="248" fill="#003e00"/>
<rect x="39" y="0" width="1" height="248" fill="#003e00"/>
<rect x="46" y="0" width="1" height="248" fill="#003e00"/>
<rect x="52" y="0" width="1" height="248" fill="#003e00"/>
<rect x="59" y="0" width="1" height="248" fill="#003e00"/>
<rect x="65" y="0" width="1" height="248" fill="#003e00"/>
<rect x="72" y="0" width="1" height="248" fill="#006c00"/>
<rect x="78" y="0" width="1" height="248" fill="#003e00"/>
<rect x="85" y="0" width="1" height="248" fill="#003e00"/>
<rect x="91" y="0" width="1" height="248" fill="#003e00"/>
<rect x="98" y="0" width="1" height="248" fill="#003e00"/>
<rect x="104" y="0" width="1" height="248" fill="#003e00"/>
<rect x="111" y="0" width="1" height="248" fill="#003e00"/>
<rect x="117" y="0" width="1" height="248" fill="#003e00"/>
<rect x="124" y="0" width="1" height="248" fill="#003e00"/>
<rect x="130" y="0" width="1" height="248" fill="#003e00"/>
<rect x="137" y="0" width="1" height="248" fill="#006c00"/>
<rect x="143" y="0" width="1" height="248" fill="#003e00"/>
<rect x="150" y="0" width="1" height="248" fill="#003e00"/>
<rect x="156" y="0" width="1" height="248" fill="#003e00"/>
<rect x="163" y="0" width="1" height="248" fill="#003e00"/>
<rect x="169" y="0" width="1" height="248" fill="#003e00"/>
<rect x="176" y="0" width="1" height="248" fill="#003e00"/>
<rect x="182" y="0" width="1" height="248" fill="#003e00"/>
<rect x="189" y="0" width="1" height="248" fill="#003e00"/>
<rect x="195" y="0" width="1" height="248" fill="#003e00"/>
<rect x="202" y="0" width="1" height="248" fill="#006c00"/>
<rect x="208" y="0" width="1" height="248" fill="#003e00"/>
<rect x="215" y="0" width="1" height="248" fill="#003e00"/>
<rect x="221" y="0" width="1" height="248" fill="#003e00"/>
<rect x="228" y="0" width="1" height="248" fill="#003e00"/>
<rect x="234" y="0" width="1" height="248" fill="#003e00"/>
<rect x="240" y="0" width="1" height="248" fill="#003e00"/>
<rect x="247" y="0" width="1" height="248" fill="#003e00"/>
<rect x="253" y="0" width="1" height="248" fill="#003e00"/>
<rect x="260" y="0" width="1" height="248" fill="#003e00"/>
<rect x="266" y="0" width="1" height="248" fill="#006c00"/>
<rect x="273" y="0" width="1" height="248" fill="#003e00"/>
<rect x="279" y="0" width="1" height="248" fill="#003e00"/>
<rect x="286" y="0" width="1" height="248" fill="#003e00"/>
<rect x="292" y="0" width="1" height="248" fill="#003e00"/>
<rect x="299" y="0" width="1" height="248" fill="#003e00"/>
<rect x="305" y="0" width="1" height="248" fill="#003e00"/>
<rect x="312" y="0" width="1" height="248" fill="#003e00"/>
<rect x="318" y="0" width="1" height="248" fill="#003e00"/>
<rect x="325" y="0" width="1" height="248" fill="#003e00"/>
<rect x="331" y="0" width="1" height="248" fill="#006c00"/>
<rect x="338" y="0" width="1" height="248" fill="#003e00"/>
<rect x="344" y="0" width="1" height="248" fill="#003e00"/>
<rect x="351" y="0" width="1" height="248" fill="#003e00"/>
<rect x="357" y="0" width="1" height="248" fill="#003e00"/>
<rect x="364" y="0" width="1" height="248" fill="#003e00"/>
<rect x="370" y="0" width="1" height="248" fill="#003e00"/>
<rect x="377" y="0" width="1" height="248" fill="#003e00"/>
<rect x="383" y="0" width="1" height="248" fill="#003e00"/>
<rect x="390" y="0" width="1" height="248" fill="#003e00"/>
<rect x="396" y="0" width="1" height="248" fill="#006c00"/>
<rect x="403" y="0" width="1" height="248" fill="#003e00"/>
<rect x="409" y="0" width="1" height="248" fill="#003e00"/>
<rect x="416" y="0" width="1" height="248" fill="#003e00"/>
<rect x="422" y="0" width="1" height="248" fill="#003e00"/>
<rect x="429" y="0" width="1" height="248" fill="#003e00"/>
<rect x="435" y="0" width="1" height="248" fill="#003e00"/>
<rect x="442" y="0" width="1" height="248" fill="#003e00"/>
<rect x="448" y="0" width="1" height="248" fill="#003e00"/>
<rect x="455" y="0" width="1" height="248" fill="#003e00"/>
<rect x="461" y="0" width="1" height="248" fill="#006c00"/>
<rect x="468" y="0" width="1" height="248" fill="#003e00"/>
<rect x="474" y="0" width="1" height="248" fill="#003e00"/>
<rect x="481" y="0" width="1" height="248" fill="#003e00"/>
<rect x="487" y="0" width="1" height="248" fill="#003e00"/>
<rect x="494" y="0" width="1" height="248" fill="#003e00"/>
<rect x="500" y="0" width="1" height="248" fill="#003e00"/>
<rect x="507" y="0" width="1" height="248" fill="#003e00"/>
<rect x="513" y="0" width="1" height="248" fill="#003e00"/>
<rect x="520" y="0" width="1" height="248" fill="#003e00"/>
<rect x="526" y="0" width="1" height="248" fill="#006c00"/>
<rect x="533" y="0" width="1" height="248" fill="#003e00"/>
<rect x="539" y="0" width="1" height="248" fill="#003e00"/>
<rect x="546" y="0" width="1" height="248" fill="#003e00"/>
<rect x="552" y="0" width="1" height="248" fill="#003e00"/>
<rect x="559" y="0" width="1" height="248" fill="#003e00"/>
<rect x="565" y="0" width="1" height="248" fill="#003e00"/>
<rect x="572" y="0" width="1" height="248" fill="#003e00"/>
<rect x="578" y="0" width="1" height="248" fill="#003e00"/>
<rect x="585" y="0" width="1" height="248" fill="#003e00"/>
<rect x="0" y="8" width="592" height="1" fill="#003e00"/>
<rect x="0" y="15" width="592" height="1" fill="#003e00"/>
<rect x="0" y="23" width="592" height="1" fill="#003e00"/>
<rect x="0" y="31" width="592" height="1" fill="#006c00"/>
<rect x="0" y="39" width="592" height="1" fill="#003e00"/>
<rect x="0" y="46" width="592" height="1" fill="#003e00"/>
<rect x="0" y="54" width="592" height="1" fill="#003e00"/>
<rect x="0" y="62" width="592" height="1" fill="#006c00"/>
<rect x="0" y="69" width="592" height="1" fill="#003e00"/>
<rect x="0" y="77" width="592" height="1" fill="#003e00"/>
<rect x="0" y="85" width="592" height="1" fill="#003e00"/>
<rect x="0" y="93" width="592" height="1" fill="#006c00"/>
<rect x="0" y="100" width="592" height="1" fill="#003e00"/>
<rect x="0" y="108" width="592" height="1" fill="#003e00"/>
<rect x="0" y="116" width="592" height="1" fill="#003e00"/>
<rect x="0" y="123" width="592" height="1" fill="#006c00"/>
<rect x="0" y="131" width="592" height="1" fill="#003e00"/>
<rect x="0" y="139" width="592" height="1" fill="#003e00"/>
<rect x="0" y="147" width="592" height="1" fill="#003e00"/>
<rect x="0" y="154" width="592" height="1" fill="#006c00"/>
<rect x="0" y="162" width="592" height="1" fill="#003e00"/>
<rect x="0" y="170" width="592" height="1" fill="#003e00"/>
<rect x="0" y="178" width="592" height="1" fill="#003e00"/>
<rect x="0" y="185" width="592" height="1" fill="#006c00"/>
<rect x="0" y="193" width="592" height="1" fill="#003e00"/>
<rect x="0" y="201" width="592" height="1" fill="#003e00"/>
<rect x="0" y="208" width="592" height="1" fill="#003e00"/>
<rect x="0" y="216" width="592" height="1" fill="#006c00"/>
<rect x="0" y="224" width="592" height="1" fill="#003e00"/>
<rect x="0" y="232" width="592" height="1" fill="#003e00"/>
<rect x="0" y="239" width="592" height="1" fill="#003e00"/>
<rect x="0" y="0" width="1" height="248" fill="#3399ff"/>
<rect x="0" y="125" width="1" height="5" fill="#000"/>
<rect x="2" y="127" width="4" height="1" fill="#80ffff"/>
<rect x="6" y="0" width="1" height="248" fill="#ff1010"/>
</svg>
<div style="position:absolute;left:69px;top:422px;width:594px;height:1px;background:#6a6a6a;"></div>
<div style="position:absolute;left:69px;top:422px;width:1px;height:250px;background:#6a6a6a;"></div>
<div style="position:absolute;left:69px;top:671px;width:594px;height:1px;background:#f2f2f2;"></div>
<div style="position:absolute;left:662px;top:422px;width:1px;height:250px;background:#f2f2f2;"></div>
<svg style="position:absolute;left:70px;top:423px" width="592" height="248"><polyline points="0.5,218.99 2.5,218.17 4.5,217.34 6.5,216.51 8.5,215.67 10.5,214.82 12.5,213.97 14.5,213.11 16.5,212.24 18.5,211.37 20.5,210.50 22.5,209.61 24.5,208.73 26.5,207.83 28.5,206.93 30.5,206.03 32.5,205.12 34.5,204.21 36.5,203.29 38.5,202.36 40.5,201.43 42.5,200.49 44.5,199.55 46.5,198.61 48.5,197.65 50.5,196.70 52.5,195.74 54.5,194.77 56.5,193.80 58.5,192.82 60.5,191.84 62.5,190.85 64.5,189.86 66.5,188.87 68.5,187.87 70.5,186.86 72.5,185.85 74.5,184.84 76.5,183.82 78.5,182.80 80.5,181.77 82.5,180.74 84.5,179.71 86.5,178.67 88.5,177.62 90.5,176.57 92.5,175.52 94.5,174.46 96.5,173.40 98.5,172.34 100.5,171.27 102.5,170.20 104.5,169.12 106.5,168.04 108.5,166.96 110.5,165.87 112.5,164.78 114.5,163.69 116.5,162.59 118.5,161.49 120.5,160.38 122.5,159.27 124.5,158.16 126.5,157.05 128.5,155.93 130.5,154.81 132.5,153.68 134.5,152.55 136.5,151.42 138.5,150.29 140.5,149.15 142.5,148.01 144.5,146.87 146.5,145.72 148.5,144.57 150.5,143.42 152.5,142.26 154.5,141.11 156.5,139.95 158.5,138.78 160.5,137.62 162.5,136.45 164.5,135.28 166.5,134.11 168.5,132.93 170.5,131.75 172.5,130.57 174.5,129.39 176.5,128.21 178.5,127.02 180.5,125.83 182.5,124.64 184.5,123.45 186.5,122.25 188.5,121.06 190.5,119.86 192.5,118.66 194.5,117.46 196.5,116.25 198.5,115.05 200.5,113.84 202.5,112.63 204.5,111.42 206.5,110.21 208.5,108.99 210.5,107.78 212.5,106.56 214.5,105.34 216.5,104.12 218.5,102.90 220.5,101.68 222.5,100.46 224.5,99.23 226.5,98.01 228.5,96.78 230.5,95.55 232.5,94.33 234.5,93.10 236.5,91.87 238.5,90.64 240.5,89.40 242.5,88.17 244.5,86.94 246.5,85.70 248.5,84.47 250.5,83.23 252.5,82.00 254.5,80.76 256.5,79.53 258.5,78.29 260.5,77.06 262.5,75.82 264.5,74.59 266.5,73.36 268.5,72.14 270.5,70.92 272.5,69.71 274.5,68.50 276.5,67.30 278.5,66.10 280.5,64.92 282.5,63.74 284.5,62.58 286.5,61.43 288.5,60.28 290.5,59.15 292.5,58.03 294.5,56.93 296.5,55.84 298.5,54.77 300.5,53.71 302.5,52.67 304.5,51.65 306.5,50.64 308.5,49.65 310.5,48.69 312.5,47.74 314.5,46.82 316.5,45.92 318.5,45.04 320.5,44.18 322.5,43.35 324.5,42.55 326.5,41.76 328.5,41.00 330.5,40.26 332.5,39.55 334.5,38.85 336.5,38.18 338.5,37.53 340.5,36.89 342.5,36.28 344.5,35.69 346.5,35.12 348.5,34.57 350.5,34.03 352.5,33.52 354.5,33.02 356.5,32.54 358.5,32.07 360.5,31.63 362.5,31.20 364.5,30.78 366.5,30.38 368.5,30.00 370.5,29.63 372.5,29.28 374.5,28.94 376.5,28.61 378.5,28.30 380.5,27.99 382.5,27.71 384.5,27.43 386.5,27.17 388.5,26.91 390.5,26.67 392.5,26.44 394.5,26.22 396.5,26.01 398.5,25.81 400.5,25.62 402.5,25.43 404.5,25.26 406.5,25.09 408.5,24.93 410.5,24.78 412.5,24.64 414.5,24.50 416.5,24.37 418.5,24.25 420.5,24.13 422.5,24.02 424.5,23.91 426.5,23.80 428.5,23.71 430.5,23.61 432.5,23.52 434.5,23.43 436.5,23.34 438.5,23.26 440.5,23.18 442.5,23.10 444.5,23.02 446.5,22.95 448.5,22.87 450.5,22.80 452.5,22.73 454.5,22.66 456.5,22.60 458.5,22.53 460.5,22.47 462.5,22.41 464.5,22.35 466.5,22.29 468.5,22.23 470.5,22.18 472.5,22.12 474.5,22.07 476.5,22.02 478.5,21.97 480.5,21.93 482.5,21.88 484.5,21.84 486.5,21.80 488.5,21.76 490.5,21.72 492.5,21.68 494.5,21.64 496.5,21.61 498.5,21.58 500.5,21.54 502.5,21.51 504.5,21.48 506.5,21.46 508.5,21.43 510.5,21.41 512.5,21.38 514.5,21.36 516.5,21.34 518.5,21.32 520.5,21.30 522.5,21.28 524.5,21.27 526.5,21.25 528.5,21.24 530.5,21.23 532.5,21.22 534.5,21.21 536.5,21.20 538.5,21.19 540.5,21.19 542.5,21.18 544.5,21.18 546.5,21.17 548.5,21.17 550.5,21.17 552.5,21.17 554.5,21.17 556.5,21.17 558.5,21.18 560.5,21.18 562.5,21.19 564.5,21.19 566.5,21.20 568.5,21.21 570.5,21.22 572.5,21.23 574.5,21.24 576.5,21.25 578.5,21.26 580.5,21.27 582.5,21.29 584.5,21.30 586.5,21.32 588.5,21.33 590.5,21.35 592.5,21.37" fill="none" stroke="#80ff00" stroke-width="1.7"/>
<path d="M1 216.5 H12" stroke="#ff1010" stroke-width="1.2"/><path d="M3.5 213.5 L9.5 219.5 M9.5 213.5 L3.5 219.5" stroke="#ff1010" stroke-width="1"/>
</svg>
<div style="position:absolute;left:63px;top:423px;width:5px;height:1px;background:#000;"></div>
<div class="t" style="right:628.5px;text-align:right;top:417.36px;font-size:11px;color:#000;">8.00</div>
<div style="position:absolute;left:63px;top:454px;width:5px;height:1px;background:#000;"></div>
<div class="t" style="right:628.5px;text-align:right;top:448.36px;font-size:11px;color:#000;">6.00</div>
<div style="position:absolute;left:63px;top:485px;width:5px;height:1px;background:#000;"></div>
<div class="t" style="right:628.5px;text-align:right;top:479.36px;font-size:11px;color:#000;">4.00</div>
<div style="position:absolute;left:63px;top:516px;width:5px;height:1px;background:#000;"></div>
<div class="t" style="right:628.5px;text-align:right;top:510.36px;font-size:11px;color:#000;">2.00</div>
<div style="position:absolute;left:63px;top:546px;width:5px;height:1px;background:#000;"></div>
<div class="t" style="right:628.5px;text-align:right;top:540.36px;font-size:11px;color:#000;">0.00</div>
<div style="position:absolute;left:63px;top:577px;width:5px;height:1px;background:#000;"></div>
<div class="t" style="right:628.5px;text-align:right;top:571.36px;font-size:11px;color:#000;">-2.00</div>
<div style="position:absolute;left:63px;top:608px;width:5px;height:1px;background:#000;"></div>
<div class="t" style="right:628.5px;text-align:right;top:602.36px;font-size:11px;color:#000;">-4.00</div>
<div style="position:absolute;left:63px;top:639px;width:5px;height:1px;background:#000;"></div>
<div class="t" style="right:628.5px;text-align:right;top:633.36px;font-size:11px;color:#000;">-6.00</div>
<div style="position:absolute;left:63px;top:670px;width:5px;height:1px;background:#000;"></div>
<div class="t" style="right:628.5px;text-align:right;top:664.36px;font-size:11px;color:#000;">-8.00</div>
<div style="position:absolute;left:70px;top:673px;width:1px;height:5px;background:#000;"></div>
<div style="position:absolute;left:77px;top:673px;width:1px;height:5px;background:#000;"></div>
<div style="position:absolute;left:142px;top:673px;width:1px;height:5px;background:#000;"></div>
<div style="position:absolute;left:207px;top:673px;width:1px;height:5px;background:#000;"></div>
<div style="position:absolute;left:272px;top:673px;width:1px;height:5px;background:#000;"></div>
<div style="position:absolute;left:336px;top:673px;width:1px;height:5px;background:#000;"></div>
<div style="position:absolute;left:401px;top:673px;width:1px;height:5px;background:#000;"></div>
<div style="position:absolute;left:466px;top:673px;width:1px;height:5px;background:#000;"></div>
<div style="position:absolute;left:531px;top:673px;width:1px;height:5px;background:#000;"></div>
<div style="position:absolute;left:596px;top:673px;width:1px;height:5px;background:#000;"></div>
<div style="position:absolute;left:661px;top:673px;width:1px;height:5px;background:#000;"></div>
<div class="t" style="left:-80px;width:300px;text-align:center;top:679.86px;font-size:11px;color:#000;">1.790m</div>
<div class="t" style="left:-8px;width:300px;text-align:center;top:679.86px;font-size:11px;color:#000;">4.000m</div>
<div class="t" style="left:57px;width:300px;text-align:center;top:679.86px;font-size:11px;color:#000;">6.000m</div>
<div class="t" style="left:122px;width:300px;text-align:center;top:679.86px;font-size:11px;color:#000;">8.000m</div>
<div class="t" style="left:186px;width:300px;text-align:center;top:679.86px;font-size:11px;color:#000;">10.000m</div>
<div class="t" style="left:251px;width:300px;text-align:center;top:679.86px;font-size:11px;color:#000;">12.000m</div>
<div class="t" style="left:316px;width:300px;text-align:center;top:679.86px;font-size:11px;color:#000;">14.000m</div>
<div class="t" style="left:381px;width:300px;text-align:center;top:679.86px;font-size:11px;color:#000;">16.000m</div>
<div class="t" style="left:446px;width:300px;text-align:center;top:679.86px;font-size:11px;color:#000;">18.000m</div>
<div class="t" style="left:511px;width:300px;text-align:center;top:679.86px;font-size:11px;color:#000;">20.000m</div>
<div class="t" style="left:218px;width:300px;text-align:center;top:695.36px;font-size:11px;color:#000;">Time (s)</div>
<div class="t" style="left:24px;top:547.3px;font-size:12.2px;transform:translate(-50%,-50%) rotate(-90deg);">Amplitude (V)</div>
</body></html>
